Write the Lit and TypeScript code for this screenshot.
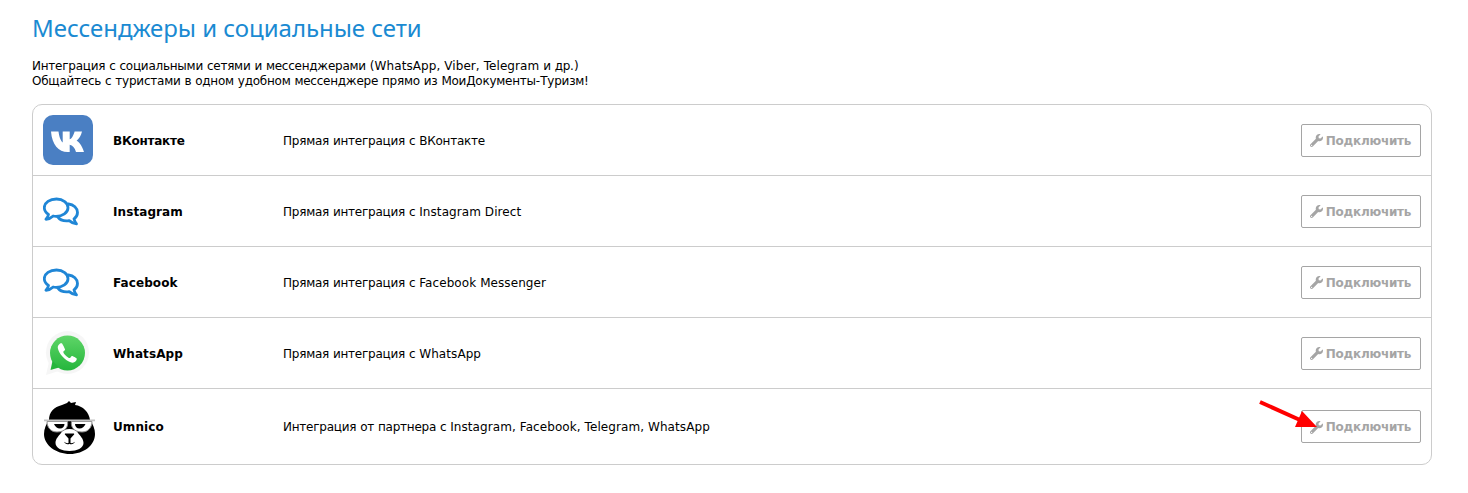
import { LitElement, html, css, svg } from "lit";
import { customElement } from "lit/decorators.js";

const WRENCH = "M507.73 109.1c-2.24-9.03-13.54-12.09-20.12-5.51l-74.36 74.36-67.88-11.31-11.31-67.88 74.36-74.36c6.62-6.62 3.43-17.9-5.66-20.16-47.38-11.74-99.55.91-136.58 37.93-39.64 39.64-50.55 97.1-34.05 147.2L18.74 402.76c-24.99 24.99-24.99 65.51 0 90.5 24.99 24.99 65.51 24.99 90.5 0l213.21-213.21c50.12 16.71 107.47 5.68 147.37-34.22 37.07-37.07 49.7-89.32 37.91-136.73zM64 472c-13.25 0-24-10.75-24-24 0-13.26 10.75-24 24-24s24 10.74 24 24c0 13.25-10.75 24-24 24z";

const vkIcon = svg`<svg width="50" height="50" viewBox="0 0 50 50">
  <rect width="50" height="50" rx="10" fill="#4a7fc3"/>
  <path fill="#fff" d="M8 16.500h7.500c.6 5 2.200 9.300 4.200 11V16.500h7v7.800c1.900-.5 3.800-3.800 4.900-7.800h7.400c-1 4.400-3 7.400-5.400 9.200 2.400 1.200 5.200 4.200 7.400 11.300h-8c-1.300-4.200-3.400-6.700-6.300-7.200v7.200h-2C15.500 37 9 29.800 8 16.500z"/>
</svg>`;

const chatIcon = svg`<svg width="38" height="30" viewBox="1 0 38 30" fill="none" stroke="#1f86d6" stroke-width="2.800" stroke-linejoin="round" stroke-linecap="round">
  <path d="M26.500 8c5 .5 9 4 9 8.500 0 2.700-1.300 4.800-3.500 6.300.3 1.700 1 3.200 2.500 5-2.900-.2-5.300-1.400-7.300-3.200-.9.200-1.800.3-2.700.3-3.900 0-7.200-1.700-9-4.300"/>
  <path d="M14.500 3C8 3 2.300 6.600 2.300 11.700c0 2.800 1.700 5.100 4.200 6.700-.2 1.700-1 3.300-2.500 4.900 2.900-.2 5.300-1.500 7.200-3.300 1 .2 1.900.3 2.800.3 6.500 0 12-3.700 12-8.600S21 3 14.500 3z"/>
</svg>`;

const whatsappIcon = svg`<svg width="50" height="50" viewBox="0 0 50 50">
  <defs><linearGradient id="wa" x1="0" y1="0" x2="0" y2="1"><stop offset="0" stop-color="#5fd568"/><stop offset="1" stop-color="#25b63c"/></linearGradient></defs>
  <circle cx="24.500" cy="24.500" r="21.500" fill="#f6f6f6"/>
  <path fill="#f6f6f6" d="M6 34L3 47l13-4z"/>
  <circle cx="24.500" cy="25" r="17.500" fill="url(#wa)"/>
  <path fill="#25b63c" d="M9.500 33L7.500 42l8.500-2.500z"/>
  <path fill="#fff" d="M18.800 15.200c-.6-.1-1.200-.1-1.700.2-1.600 1-2.600 2.800-2.300 4.700.8 5.100 7.200 12.900 13.400 14.400 2 .5 4.200-.4 5.200-2.200.3-.6.400-1.200.3-1.800-.1-.5-4.200-2.600-4.800-2.500-.6.1-1.500 2-2.100 2.100-1.400.4-6.900-4.400-6.500-6.300.1-.6 1.700-1.600 1.800-2.100.1-.7-2.800-6.400-3.300-6.500z"/>
</svg>`;

const bearIcon = svg`<svg width="54" height="54" viewBox="0 0 54 54">
  <path fill="#000" d="M6 20C6 12 11 7 19 5l5-2 2-2 2 2 5-1-1 3c8 1 14 7 15 15 3 4 5 9 5 14 0 11-11 20-25 20S1 45 1 34c0-5 2-10 5-14z"/>
  <path fill="#fff" d="M26.500 29c-4 0-7 1-8.500 4-2.500 3-5.500 6-5.500 10 0 5 6.500 8 14 8s14-3 14-8c0-4-3-7-5.500-10-1.500-3-4.500-4-8.500-4z"/>
  <path fill="#000" d="M22.500 33.500h8c.6 0 .9.600.6 1.100l-3.600 3.900V43c1.500.4 3-.1 4.500-1.200-1 2.200-3.500 3.200-5.500 2-2 1.200-4.500.2-5.500-2 1.500 1.100 3 1.600 4.500 1.200v-4.500l-3.600-3.900c-.3-.5 0-1.100.6-1.100z"/>
  <path fill="#fff" stroke="#8c8c8c" stroke-width="1" d="M4 21.500h20.500c1 5-2 10.500-10.500 10.500-6.500 0-10-5-10-10.500zM49 21.500H28.500c-1 5 2 10.500 10.500 10.500 6.500 0 10-5 10-10.500z"/>
  <path fill="#000" d="M11 24h10.500c0 2.500-1.800 4.500-4.500 4.500-2.700 0-5-2-6-4.500zM32 24h10.500c-1 2.500-3.300 4.500-6 4.500-2.700 0-4.500-2-4.500-4.500z"/>
  <path fill="#c4c4c4" d="M1 19.500h51v1.700H1z"/>
</svg>`;

const ITEMS = [
  { icon: vkIcon, name: "ВКонтакте", desc: "Прямая интеграция с ВКонтакте" },
  { icon: chatIcon, name: "Instagram", desc: "Прямая интеграция с Instagram Direct" },
  { icon: chatIcon, name: "Facebook", desc: "Прямая интеграция с Facebook Messenger" },
  { icon: whatsappIcon, name: "WhatsApp", desc: "Прямая интеграция с WhatsApp" },
  { icon: bearIcon, name: "Umnico", desc: "Интеграция от партнера с Instagram, Facebook, Telegram, WhatsApp" },
];

// the cyrillic in the reference runs narrower than DejaVu, latin does not
const fit = (text: string) =>
  text.split(/([А-Яа-яЁё]+)/).map((part, i) => (i % 2 ? html`<span class="cy">${part}</span>` : part));

@customElement("app-root")
export class AppRoot extends LitElement {
  static styles = css`
    :host {
      display: block;
      position: relative;
      height: 493px;
      background: #fff;
      padding: 0 36px 0 32px;
      box-sizing: border-box;
      font-family: "DejaVu Sans", sans-serif;
      font-size: 12px;
      letter-spacing: 0.08px;
      color: #000;
    }
    .cy {
      letter-spacing: -0.24px;
    }
    h1 {
      margin: 0;
      padding: 13px 0 0 0;
      height: 47px;
      box-sizing: border-box;
      font-family: "Noto Sans", sans-serif;
      font-size: 24px;
      line-height: 30px;
      font-weight: 400;
      letter-spacing: -0.04px;
      color: #1a8ad2;
    }
    .intro {
      margin: 12px 0 0;
      height: 45px;
      line-height: 15px;
    }
    .list {
      border: 1px solid #ccc;
      border-radius: 10px;
    }
    .row {
      display: flex;
      align-items: center;
      height: 70px;
      border-top: 1px solid #ccc;
      padding-right: 10px;
    }
    .row:first-child {
      border-top: 0;
    }
    .row:last-child {
      height: 75px;
    }
    .icon {
      width: 80px;
      padding-left: 10px;
      box-sizing: border-box;
      display: flex;
      align-items: center;
    }
    .name {
      width: 170px;
      font-weight: 700;
      padding-top: 2px;
    }
    .desc {
      flex: 1;
      padding-top: 2px;
    }
    .row:last-child .name,
    .row:last-child .desc {
      padding-top: 0;
    }
    .btn {
      width: 120px;
      height: 33px;
      box-sizing: border-box;
      display: flex;
      align-items: center;
      justify-content: center;
      gap: 3px;
      padding: 1px 1px 0 0;
      border: 1px solid #a5a5a5;
      border-radius: 2px;
      background: #fff;
      color: #a5a5a5;
      font-weight: 700;
    }
    .btn svg {
      display: block;
    }
    .arrow {
      position: absolute;
      left: 1250px;
      top: 395px;
    }
  `;

  render() {
    return html`
      <h1>Мессенджеры и социальные сети</h1>
      <p class="intro">
        ${fit("Интеграция с социальными сетями и мессенджерами (WhatsApp, Viber, Telegram и др.)")}<br />
        ${fit("Общайтесь с туристами в одном удобном мессенджере прямо из МоиДокументы-Туризм!")}
      </p>
      <div class="list">
        ${ITEMS.map(
          (it) => html`
            <div class="row">
              <div class="icon">${it.icon}</div>
              <div class="name">${fit(it.name)}</div>
              <div class="desc">${fit(it.desc)}</div>
              <div class="btn">
                <svg width="13" height="13" viewBox="0 0 512 512"><path fill="currentColor" d=${WRENCH} /></svg>
                ${fit("Подключить")}
              </div>
            </div>
          `
        )}
      </div>
      <svg class="arrow" width="80" height="50" viewBox="0 0 80 50">
        <path d="M10 7L50 25" stroke="#f00" stroke-width="4" fill="none" />
        <path d="M67 32L52 16 45 32z" fill="#f00" />
      </svg>
    `;
  }
}
